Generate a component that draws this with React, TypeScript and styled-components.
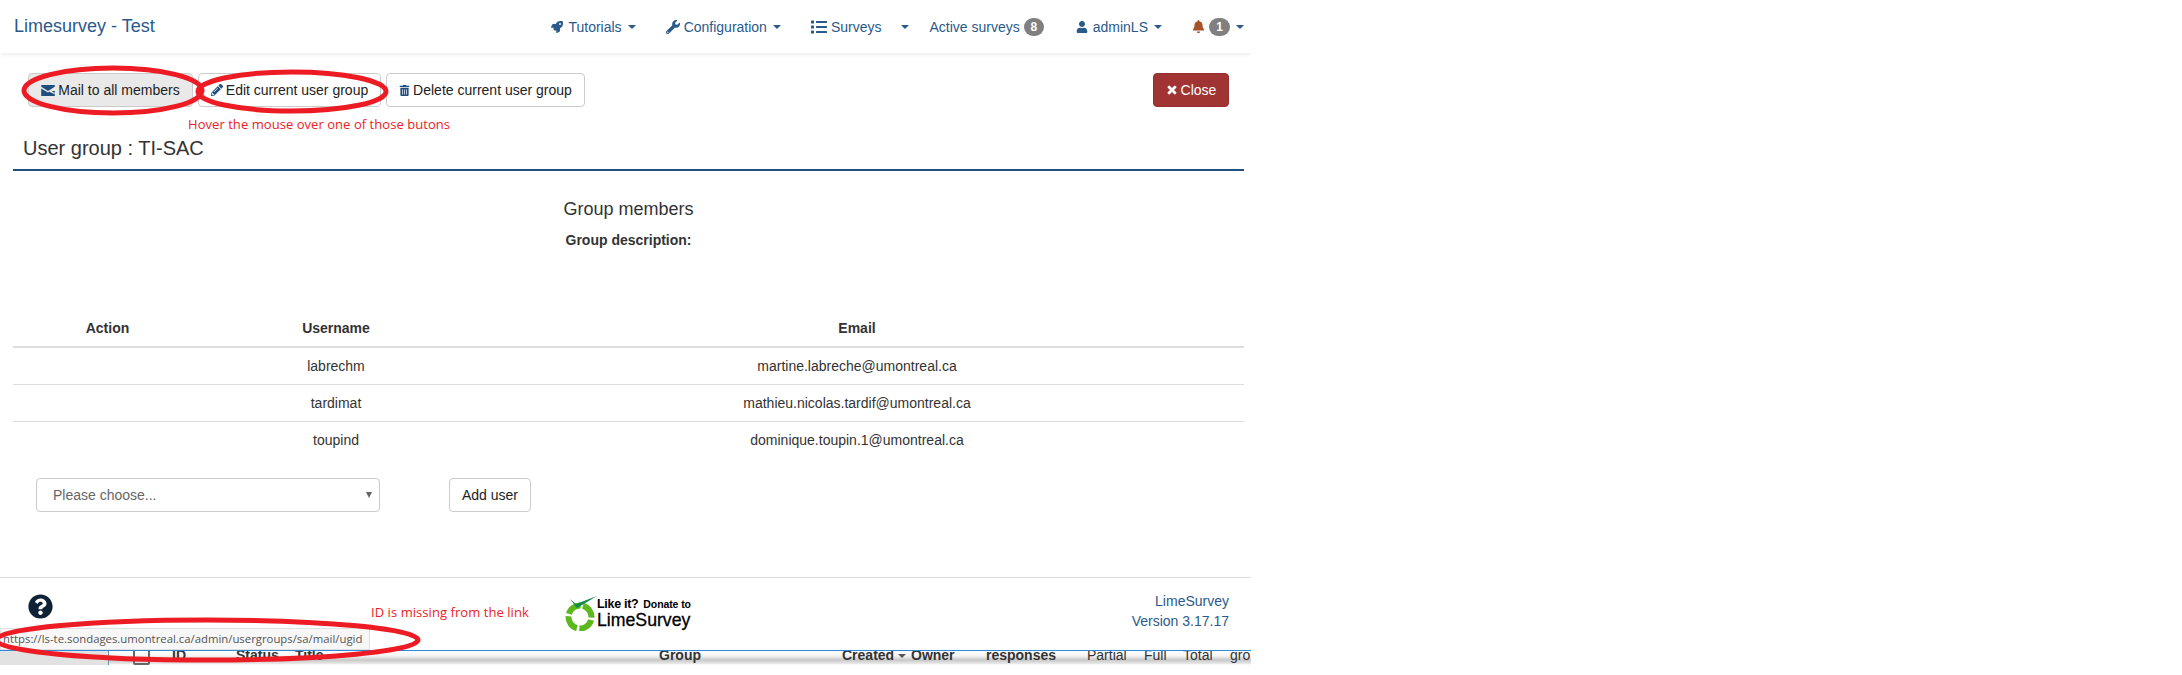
import * as React from "react"
import styled, { createGlobalStyle } from "styled-components"
import {
  FaBell,
  FaList,
  FaPencilAlt,
  FaQuestionCircle,
  FaRocket,
  FaTimes,
  FaTrashAlt,
  FaUser,
  FaWrench,
} from "react-icons/fa"

const Global = createGlobalStyle`
html, body {
  margin: 0;
  padding: 0;
  background: #fff;
}
body {
  font-family: "Liberation Sans", Arial, sans-serif;
  font-size: 14px;
  color: #333;
}
`

const Frame = styled.div`
  position: relative;
  width: 1251px;
  height: 675px;
  overflow: hidden;
`

const Navbar = styled.header`
  height: 53px;
  display: flex;
  align-items: center;
  justify-content: space-between;
  padding: 0 7px 0 14px;
  box-sizing: border-box;
  box-shadow: 0 2px 4px rgba(0, 0, 0, 0.07);
  color: #2a5a8a;
`

const Brand = styled.div`
  font-size: 18px;
`

const NavList = styled.nav`
  display: flex;
  align-items: center;
`

const NavItem = styled.div<{ $gap?: number }>`
  display: flex;
  align-items: center;
  margin-left: ${(p) => p.$gap ?? 30}px;
  svg {
    display: block;
  }
`

const NavLabel = styled.span<{ $left?: number }>`
  margin-left: ${(p) => p.$left ?? 4}px;
`

const Caret = styled.span<{ $left?: number }>`
  width: 0;
  height: 0;
  margin-left: ${(p) => p.$left ?? 6}px;
  border-top: 4px solid #2a5a8a;
  border-left: 4px solid transparent;
  border-right: 4px solid transparent;
`

const Badge = styled.span<{ $size: number }>`
  width: ${(p) => p.$size}px;
  height: 18px;
  margin-left: 4px;
  border-radius: 10px;
  background: #808080;
  color: #fff;
  font-size: 12px;
  font-weight: bold;
  line-height: 18px;
  text-align: center;
`

const Toolbar = styled.div`
  display: flex;
  justify-content: space-between;
  margin-top: 20px;
  padding: 0 22px 0 28px;
`

const ButtonGroup = styled.div`
  display: flex;
  gap: 5px;
`

const Button = styled.button<{ $active?: boolean; $width: number }>`
  height: 34px;
  width: ${(p) => p.$width}px;
  padding: 0;
  display: flex;
  align-items: center;
  justify-content: center;
  gap: 3px;
  border: 1px solid #ccc;
  border-radius: 4px;
  background: ${(p) => (p.$active ? "#e9e9e9" : "#fff")};
  color: #222;
  font: 14px "Liberation Sans", Arial, sans-serif;
  svg {
    color: #1f4e7e;
  }
`

const CloseButton = styled(Button)`
  border-color: #963030;
  background: #a03433;
  color: #fff;
  svg {
    color: #fff;
    stroke: #fff;
    stroke-width: 30px;
  }
`

const Main = styled.main`
  margin: 0 7px 0 13px;
`

const Heading = styled.h1`
  margin: 30px 0 0;
  padding: 0 0 10px 10px;
  border-bottom: 2px solid #234f80;
  font-size: 20px;
  font-weight: normal;
  line-height: 22px;
`

const MembersTitle = styled.h2`
  margin: 28px 0 0;
  font-size: 18px;
  font-weight: normal;
  line-height: 20px;
  text-align: center;
`

const Description = styled.p`
  margin: 11px 0 0;
  font-weight: bold;
  line-height: 20px;
  text-align: center;
`

const MembersTable = styled.table`
  width: 100%;
  margin-top: 59px;
  border-collapse: collapse;
  table-layout: fixed;
  th {
    height: 37px;
    padding: 0;
    border-bottom: 2px solid #ddd;
    text-align: center;
  }
  td {
    height: 36px;
    padding: 0;
    border-bottom: 1px solid #ddd;
    text-align: center;
  }
  tr:last-child td {
    border-bottom: none;
  }
`

const AddForm = styled.form`
  display: flex;
  margin: 20px 0 0 23px;
`

const SelectWrap = styled.div`
  position: relative;
  width: 344px;
  height: 34px;
`

const Select = styled.select`
  width: 100%;
  height: 100%;
  padding: 0 16px;
  appearance: none;
  border: 1px solid #ccc;
  border-radius: 4px;
  background: #fff;
  color: #666;
  font: 14px "Liberation Sans", Arial, sans-serif;
`

const SelectArrow = styled.span`
  position: absolute;
  top: 14px;
  right: 8px;
  width: 0;
  height: 0;
  border-top: 6px solid #666;
  border-left: 3px solid transparent;
  border-right: 3px solid transparent;
`

const AddButton = styled(Button)`
  margin-left: 69px;
`

const Footer = styled.footer`
  margin-top: 65px;
  height: 73px;
  box-sizing: border-box;
  border-top: 1px solid #ddd;
  padding: 0 22px 0 28px;
  display: grid;
  grid-template-columns: 343px 194px 1fr auto;
  align-items: center;
`

const HelpIcon = styled(FaQuestionCircle)`
  display: block;
  margin-top: -16px;
  color: #0f2236;
`

const Note = styled.span`
  color: #ed1c24;
  font-family: "Open Sans", sans-serif;
  font-size: 13px;
`

const IdNote = styled(Note)`
  margin-top: -5px;
  letter-spacing: 0.06px;
`

const HoverNote = styled(Note)`
  position: absolute;
  left: 188px;
  top: 114px;
  line-height: 20px;
  letter-spacing: 0.05px;
`

const DonateLogo = styled.div`
  display: flex;
  align-items: center;
  margin-top: -3px;
  gap: 0;
  color: #000;
`

const DonateText = styled.div`
  display: flex;
  flex-direction: column;
  margin-top: 2px;
`

const LikeLine = styled.span`
  font-size: 12.5px;
  font-weight: bold;
  letter-spacing: -0.3px;
  line-height: 14px;
  white-space: nowrap;
  small {
    font-size: 10.5px;
    letter-spacing: -0.1px;
    margin-left: 5px;
  }
`

const LogoWord = styled.span`
  font-size: 17.7px;
  line-height: 19px;
  -webkit-text-stroke: 0.3px #000;
`

const Version = styled.div`
  color: #2a5a8a;
  line-height: 20px;
  margin-top: -6px;
  text-align: right;
`

const BackStrip = styled.div`
  display: grid;
  grid-template-columns: 109px 24px 39px 64px 59px 364px 183px 69px 75px 101px 57px 39px 47px 21px;
  height: 15px;
  box-sizing: border-box;
  border-top: 1px solid #2a8ae0;
  overflow: hidden;
  background: linear-gradient(#fff 0%, #f4f4f4 35%, #c8c8c8 65%, #e8e8e8 90%, #fff 100%);
`

const BackCell = styled.div<{ $light?: boolean }>`
  font-size: 14px;
  font-weight: ${(p) => (p.$light ? "normal" : "bold")};
  line-height: 9px;
  white-space: nowrap;
`

const SortCaret = styled.span`
  display: inline-block;
  margin-left: 4px;
  vertical-align: 2px;
  border-top: 4px solid #555;
  border-left: 4px solid transparent;
  border-right: 4px solid transparent;
`

const BackPanel = styled.div`
  border-right: 1px solid #6a8db0;
  background: #e2e2e2;
  height: 14px;
`

const BackCheck = styled.div`
  grid-column: 3;
  width: 13px;
  height: 13px;
  margin-top: -3px;
  border: 2px solid #666;
  border-radius: 2px;
`

const UrlTip = styled.div`
  position: absolute;
  left: 0;
  top: 628px;
  width: 370px;
  height: 22px;
  box-sizing: border-box;
  padding-left: 2px;
  border: 1px solid #e0e0e0;
  background: #f7f7f7;
  color: #555;
  font-family: "Open Sans", sans-serif;
  font-size: 11.35px;
  line-height: 20px;
  white-space: nowrap;
`

const Scribbles = styled.svg`
  position: absolute;
  left: 0;
  top: 0;
  pointer-events: none;
`

const MailIcon: React.FC = () => (
  <svg width="14" height="11" viewBox="0 0 16 13">
    <path fill="#1f4e7e" d="M0 0h16v2L8 7 0 2zM0 4l8 5 5-3 3 1v6H0z" />
    <path stroke="#fff" strokeWidth="1.3" fill="none" d="M16 5l-5 3 5 2" />
  </svg>
)

const LimeMark: React.FC = () => (
  <svg width="32" height="36" viewBox="0 0 32 36">
    <circle
      cx="15"
      cy="22"
      r="11.5"
      fill="none"
      stroke="#5cb81c"
      strokeWidth="6"
      strokeDasharray="15.5 2.5"
      transform="rotate(-75 15 22)"
    />
    <path d="M5 4l6 5L32 1 12 13z" fill="#148a4a" />
  </svg>
)

const members = [
  { user: "labrechm", email: "martine.labreche@umontreal.ca" },
  { user: "tardimat", email: "mathieu.nicolas.tardif@umontreal.ca" },
  { user: "toupind", email: "dominique.toupin.1@umontreal.ca" },
]

const App: React.FC = () => {
  return (
    <Frame>
      <Global />
      <Navbar>
        <Brand>Limesurvey - Test</Brand>
        <NavList>
          <NavItem>
            <FaRocket size={12} />
            <NavLabel $left={5}>Tutorials</NavLabel>
            <Caret />
          </NavItem>
          <NavItem>
            <FaWrench size={14} />
            <NavLabel>Configuration</NavLabel>
            <Caret />
          </NavItem>
          <NavItem>
            <FaList size={16} />
            <NavLabel>Surveys</NavLabel>
            <Caret $left={20} />
          </NavItem>
          <NavItem $gap={20}>
            <NavLabel $left={0}>Active surveys</NavLabel>
            <Badge $size={20}>8</Badge>
          </NavItem>
          <NavItem $gap={32}>
            <FaUser size={12} />
            <NavLabel $left={5}>adminLS</NavLabel>
            <Caret />
          </NavItem>
          <NavItem>
            <FaBell size={13} color="#a5542a" />
            <Badge $size={21}>1</Badge>
            <Caret />
          </NavItem>
        </NavList>
      </Navbar>
      <Toolbar>
        <ButtonGroup>
          <Button $active $width={165}>
            <MailIcon />
            Mail to all members
          </Button>
          <Button $width={183}>
            <FaPencilAlt size={12} />
            Edit current user group
          </Button>
          <Button $width={199}>
            <FaTrashAlt size={11} />
            Delete current user group
          </Button>
        </ButtonGroup>
        <CloseButton $width={76}>
          <FaTimes size={12} />
          Close
        </CloseButton>
      </Toolbar>
      <HoverNote>Hover the mouse over one of those butons</HoverNote>
      <Main>
        <Heading>User group : TI-SAC</Heading>
        <MembersTitle>Group members</MembersTitle>
        <Description>Group description:</Description>
        <MembersTable>
          <colgroup>
            <col width="189" />
            <col width="268" />
            <col />
          </colgroup>
          <thead>
            <tr>
              <th>Action</th>
              <th>Username</th>
              <th>Email</th>
            </tr>
          </thead>
          <tbody>
            {members.map((m) => (
              <tr key={m.user}>
                <td />
                <td>{m.user}</td>
                <td>{m.email}</td>
              </tr>
            ))}
          </tbody>
        </MembersTable>
        <AddForm>
          <SelectWrap>
            <Select>
              <option>Please choose...</option>
            </Select>
            <SelectArrow />
          </SelectWrap>
          <AddButton as="button" $width={82}>
            Add user
          </AddButton>
        </AddForm>
      </Main>
      <Footer>
        <HelpIcon size={25} />
        <IdNote>ID is missing from the link</IdNote>
        <DonateLogo>
          <LimeMark />
          <DonateText>
            <LikeLine>
              Like it?<small>Donate to</small>
            </LikeLine>
            <LogoWord>LimeSurvey</LogoWord>
          </DonateText>
        </DonateLogo>
        <Version>
          LimeSurvey
          <br />
          Version 3.17.17
        </Version>
      </Footer>
      <BackStrip>
        <BackPanel />
        <BackCheck />
        <BackCell>ID</BackCell>
        <BackCell>Status</BackCell>
        <BackCell>Title</BackCell>
        <BackCell>Group</BackCell>
        <BackCell>
          Created
          <SortCaret />
        </BackCell>
        <BackCell>Owner</BackCell>
        <BackCell>responses</BackCell>
        <BackCell $light>Partial</BackCell>
        <BackCell $light>Full</BackCell>
        <BackCell $light>Total</BackCell>
        <BackCell $light>gro</BackCell>
      </BackStrip>
      <UrlTip>https://ls-te.sondages.umontreal.ca/admin/usergroups/sa/mail/ugid</UrlTip>
      <Scribbles width="1251" height="675" fill="none" stroke="#ed1c24" strokeWidth="5">
        <ellipse cx="113" cy="90.5" rx="89" ry="22.5" />
        <ellipse cx="292" cy="91.5" rx="94" ry="19.5" />
        <ellipse cx="207" cy="640" rx="211" ry="20" />
      </Scribbles>
    </Frame>
  )
}

export default App
